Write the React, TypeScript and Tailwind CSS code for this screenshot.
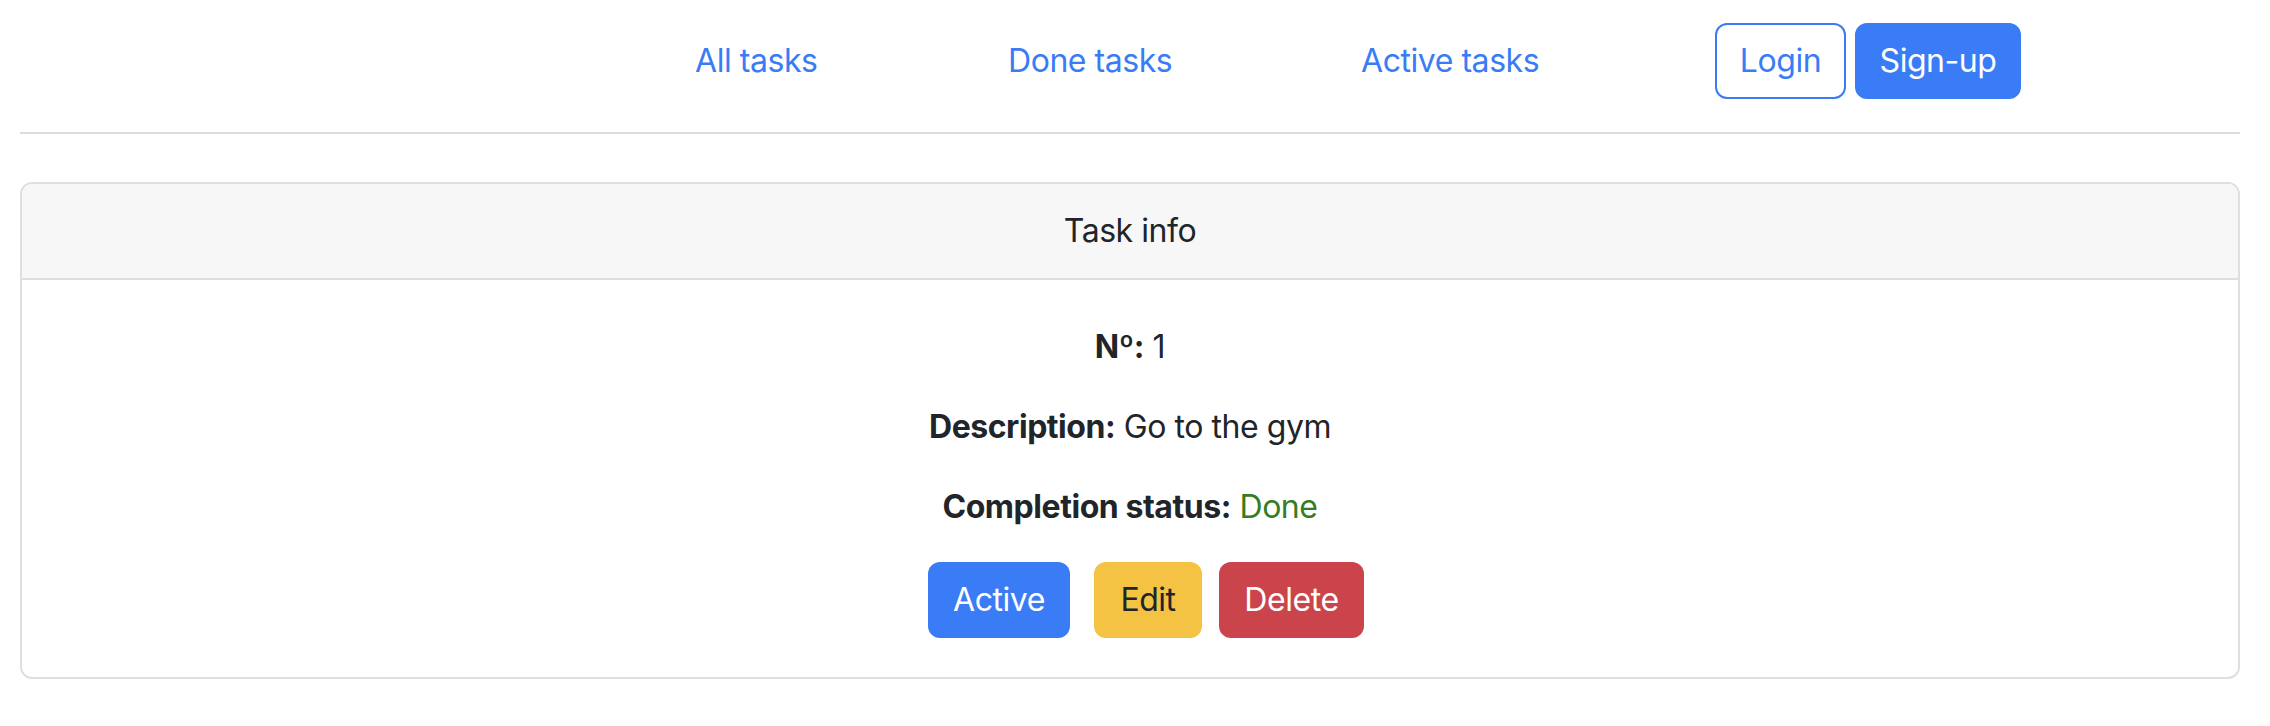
import React from 'react';

// Top navigation links
const links = [
  { label: 'All tasks', width: 'w-[313px]' },
  { label: 'Done tasks', width: 'w-[353px]' },
  { label: 'Active tasks', width: 'w-[354px]' },
];

const TaskInfo: React.FC = () => {
  return (
    <div className="min-h-screen bg-white text-[32px] leading-[48px] tracking-[-0.45px] text-[#212529] font-['Inter','Noto_Sans',sans-serif]">
      <div className="ml-[20px] w-[2220px]">
        {/* Navbar */}
        <nav className="pt-[23px]">
          <div className="flex h-[76px] items-center pl-[675px]">
            {links.map((link) => (
              <div key={link.label} className={link.width}>
                <a href="#" className="text-[#3a7bf6]">
                  {link.label}
                </a>
              </div>
            ))}
            <button className="h-[76px] w-[131px] rounded-[12px] border-2 border-[#3a7bf6] text-[#3a7bf6]">
              Login
            </button>
            <button className="ml-[9px] h-[76px] w-[166px] rounded-[12px] border-2 border-[#3a7bf6] bg-[#3a7bf6] text-white">
              Sign-up
            </button>
          </div>
        </nav>
        <hr className="mt-[33px] border-t-2 border-[#dcdde0]" />

        {/* Task card */}
        <div className="mt-[48px] overflow-hidden rounded-[12px] border-2 border-[#dfdfdf]">
          <div className="flex h-[96px] items-center justify-center border-b-2 border-[#dfdfdf] bg-[#f7f7f7]">
            Task info
          </div>
          <div className="flex flex-col items-center pt-[43px] pb-[39px]">
            <p className="mb-[32px]">
              <span className="font-bold">Nº:</span> 1
            </p>
            <p className="mb-[32px]">
              <span className="font-bold">Description:</span> Go to the gym
            </p>
            <p className="mb-[31px]">
              <span className="font-bold">Completion status:</span>{' '}
              <span className="text-[#347d22]">Done</span>
            </p>
            <div className="flex pl-[32px]">
              <button className="h-[76px] w-[142px] rounded-[12px] bg-[#3a7bf6] text-white">
                Active
              </button>
              <button className="ml-[24px] h-[76px] w-[108px] rounded-[12px] bg-[#f4c344] text-[#212529]">
                Edit
              </button>
              <button className="ml-[17px] h-[76px] w-[145px] rounded-[12px] bg-[#cc444b] text-white">
                Delete
              </button>
            </div>
          </div>
        </div>
      </div>
    </div>
  );
};

export default TaskInfo;
